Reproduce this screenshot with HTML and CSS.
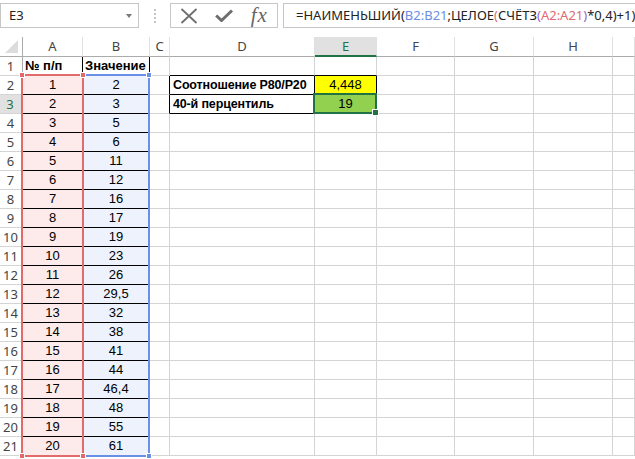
FILE: index.html
```html
<!DOCTYPE html>
<html>
<head>
<meta charset="utf-8">
<link rel="stylesheet" href="styles.css">
</head>
<body>
<div class="fbar">
  <div class="namebox">E3<span class="nb-arrow"></span></div>
  <div class="grip"><i></i><i></i><i></i><i></i></div>
  <div class="btns">
    <div class="btn"><svg width="18" height="16" viewBox="0 0 18 16"><path d="M1.5 1 L16.5 15 M16.5 1 L1.5 15" stroke="#6e6e6e" stroke-width="1.8" fill="none"/></svg></div>
    <div class="btn"><svg width="18" height="13" viewBox="0 0 18 13"><path d="M1.2 6.5 L6.5 11.5 L17 1.5" stroke="#6e6e6e" stroke-width="3" fill="none"/></svg></div>
    <div class="btn fx">fx</div>
  </div>
  <div class="finput">=НАИМЕНЬШИЙ(<span class="cb">B2:B21</span>;ЦЕЛОЕ<span class="cr">(</span>СЧЁТЗ<span class="cp">(</span><span class="cr">A2:A21</span><span class="cp">)</span>*0,4)+1)</div>
</div>

<div class="sheet">
  <div class="r hd"><div class="corner"><svg width="22" height="19" viewBox="0 0 22 19"><polygon points="5,16 18,16 18,3" fill="#dcdcdc"/></svg></div><div>A</div><div>B</div><div>C</div><div>D</div><div class="sel">E</div><div>F</div><div>G</div><div>H</div><div></div></div>
  <div class="r"><div class="rh">1</div><div class="a1">№ п/п</div><div class="b1">Значение</div><div></div><div class="tb"></div><div class="tb"></div><div></div><div></div><div></div><div></div></div>
  <div class="r"><div class="rh">2</div><div class="ka">1</div><div class="kb">2</div><div class="cl"></div><div class="d">Соотношение P80/P20</div><div class="y">4,448</div><div></div><div></div><div></div><div></div></div>
  <div class="r"><div class="rh rsel">3</div><div class="ka">2</div><div class="kb">3</div><div class="cl"></div><div class="d">40-й перцентиль</div><div class="g">19</div><div></div><div></div><div></div><div></div></div>
  <div class="r"><div class="rh">4</div><div class="ka">3</div><div class="kb">5</div><div></div><div></div><div></div><div></div><div></div><div></div><div></div></div>
  <div class="r"><div class="rh">5</div><div class="ka">4</div><div class="kb">6</div><div></div><div></div><div></div><div></div><div></div><div></div><div></div></div>
  <div class="r"><div class="rh">6</div><div class="ka">5</div><div class="kb">11</div><div></div><div></div><div></div><div></div><div></div><div></div><div></div></div>
  <div class="r"><div class="rh">7</div><div class="ka">6</div><div class="kb">12</div><div></div><div></div><div></div><div></div><div></div><div></div><div></div></div>
  <div class="r"><div class="rh">8</div><div class="ka">7</div><div class="kb">16</div><div></div><div></div><div></div><div></div><div></div><div></div><div></div></div>
  <div class="r"><div class="rh">9</div><div class="ka">8</div><div class="kb">17</div><div></div><div></div><div></div><div></div><div></div><div></div><div></div></div>
  <div class="r"><div class="rh">10</div><div class="ka">9</div><div class="kb">19</div><div></div><div></div><div></div><div></div><div></div><div></div><div></div></div>
  <div class="r"><div class="rh">11</div><div class="ka">10</div><div class="kb">23</div><div></div><div></div><div></div><div></div><div></div><div></div><div></div></div>
  <div class="r"><div class="rh">12</div><div class="ka">11</div><div class="kb">26</div><div></div><div></div><div></div><div></div><div></div><div></div><div></div></div>
  <div class="r"><div class="rh">13</div><div class="ka">12</div><div class="kb">29,5</div><div></div><div></div><div></div><div></div><div></div><div></div><div></div></div>
  <div class="r"><div class="rh">14</div><div class="ka">13</div><div class="kb">32</div><div></div><div></div><div></div><div></div><div></div><div></div><div></div></div>
  <div class="r"><div class="rh">15</div><div class="ka">14</div><div class="kb">38</div><div></div><div></div><div></div><div></div><div></div><div></div><div></div></div>
  <div class="r"><div class="rh">16</div><div class="ka">15</div><div class="kb">41</div><div></div><div></div><div></div><div></div><div></div><div></div><div></div></div>
  <div class="r"><div class="rh">17</div><div class="ka">16</div><div class="kb">44</div><div></div><div></div><div></div><div></div><div></div><div></div><div></div></div>
  <div class="r"><div class="rh">18</div><div class="ka">17</div><div class="kb">46,4</div><div></div><div></div><div></div><div></div><div></div><div></div><div></div></div>
  <div class="r"><div class="rh">19</div><div class="ka">18</div><div class="kb">48</div><div></div><div></div><div></div><div></div><div></div><div></div><div></div></div>
  <div class="r"><div class="rh">20</div><div class="ka">19</div><div class="kb">55</div><div></div><div></div><div></div><div></div><div></div><div></div><div></div></div>
  <div class="r"><div class="rh">21</div><div class="ka">20</div><div class="kb">61</div><div></div><div></div><div></div><div></div><div></div><div></div><div></div></div>

  <div class="rng blue"><i class="h tl"></i><i class="h tr"></i><i class="h bl"></i><i class="h br"></i></div>
  <div class="rng red"><i class="h tl"></i><i class="h tr"></i><i class="h bl"></i><i class="h br"></i></div>
  <div class="cur"><i class="fh"></i></div>
</div>
</body>
</html>
```

FILE: styles.css
```css
html, body {
  margin: 0;
  padding: 0;
  background: #fff;
  overflow: hidden;
}

body {
  width: 635px;
  height: 459px;
}

/* formula bar */
.fbar {
  display: flex;
  height: 25px;
  margin-top: 3px;
}

.namebox {
  position: relative;
  box-sizing: border-box;
  width: 139px;
  border: 1px solid #c6c6c6;
  padding-left: 8px;
  font: 13px "Noto Sans", sans-serif;
  line-height: 23px;
  color: #222;
}

.nb-arrow {
  position: absolute;
  right: 6px;
  top: 10px;
  width: 0;
  height: 0;
  border-left: 3.5px solid transparent;
  border-right: 3.5px solid transparent;
  border-top: 4px solid #7a7a7a;
}

.grip {
  width: 31px;
  display: flex;
  flex-direction: column;
  align-items: center;
  justify-content: center;
  gap: 2px;
}

.grip i {
  display: block;
  width: 2px;
  height: 2px;
  background: #c4c4c4;
}

.btns {
  box-sizing: border-box;
  width: 108px;
  border: 1px solid #c6c6c6;
  display: flex;
}

.btn {
  width: 36px;
  display: flex;
  align-items: center;
  justify-content: center;
}

.btn.fx {
  font: italic 21px "Liberation Serif", serif;
  color: #666;
  line-height: 23px;
  letter-spacing: 1px;
}

.finput {
  flex: 1;
  margin-left: 5px;
  box-sizing: border-box;
  border: 1px solid #c6c6c6;
  border-right: none;
  padding-left: 12px;
  font: 13px "Noto Sans", sans-serif;
  line-height: 23px;
  color: #222;
  white-space: nowrap;
  overflow: hidden;
}

.cb { color: #6b8ee2; }
.cr { color: #e06a74; }
.cp { color: #9b63c4; }

/* sheet */
.sheet {
  position: relative;
  margin-top: 9px;
}

.r {
  display: flex;
  height: 19px;
}

.r > div {
  box-sizing: border-box;
  flex: none;
  height: 100%;
  border-right: 1px solid #d4d4d4;
  border-bottom: 1px solid #d4d4d4;
  font: 13px "Liberation Sans", Arial, sans-serif;
  line-height: 18px;
  color: #000;
  white-space: nowrap;
  overflow: hidden;
}

.r > div:nth-child(1) { width: 23px; }
.r > div:nth-child(2) { width: 60px; }
.r > div:nth-child(3) { width: 67px; }
.r > div:nth-child(4) { width: 20px; }
.r > div:nth-child(5) { width: 145px; }
.r > div:nth-child(6) { width: 62px; }
.r > div:nth-child(7) { width: 78px; }
.r > div:nth-child(8) { width: 79px; }
.r > div:nth-child(9) { width: 79px; }
.r > div:nth-child(10) { flex: 1; }

.r.hd { height: 20px; }

.r.hd > div {
  border-bottom-color: #ababab;
  border-right-color: #e0e0e0;
  text-align: center;
  color: #444;
  font: 13px "Noto Sans", sans-serif;
  line-height: 19px;
}

.r.hd > .corner {
  border-right-color: #ababab;
}

.r.hd > .sel {
  background: #e1e1e1;
  color: #217346;
  border-bottom: 2px solid #217346;
  line-height: 18px;
}

.r > .rh {
  text-align: center;
  color: #444;
  font: 13px "Noto Sans", sans-serif;
  line-height: 18px;
  border-right-color: #ababab;
  padding-right: 1px;
}

.r > .rsel {
  background: #e1e1e1;
  color: #217346;
  border-right: 2px solid #217346;
}

.r > .a1,
.r > .b1 {
  font-weight: bold;
  padding-left: 2px;
  border-right-color: #000;
}

.r > .ka {
  background: #fdeaea;
  border-bottom-color: #000;
  text-align: center;
}

.r > .kb {
  background: #edf2fc;
  border-bottom-color: #000;
  border-right-color: #000;
  text-align: center;
}

.r > .tb { border-bottom-color: #000; }
.r > .cl { border-right-color: #000; }

.r > .d {
  font-weight: bold;
  font-size: 12.5px;
  letter-spacing: -0.15px;
  padding-left: 3px;
  border-right-color: #000;
  border-bottom-color: #000;
}

.r > .y {
  background: #ffff00;
  text-align: center;
  border-right-color: #000;
  border-bottom-color: #000;
}

.r > .g {
  background: #92d050;
  text-align: center;
  border-right-color: #000;
  border-bottom-color: #000;
}

/* range highlights (overlays) */
.rng {
  position: absolute;
  box-sizing: border-box;
  top: 37px;
  height: 383px;
  border: 2px solid;
}

.red {
  left: 21px;
  width: 63px;
  border-color: #e26a6a;
  color: #e26a6a;
}

.blue {
  left: 82px;
  width: 68px;
  border-color: #6a8fe6;
  color: #6a8fe6;
}

.h {
  position: absolute;
  width: 4px;
  height: 4px;
  background: currentColor;
  border: 1px solid #fff;
}

.tl { left: -4px; top: -4px; }
.tr { right: -4px; top: -4px; }
.bl { left: -4px; bottom: -4px; }
.br { right: -4px; bottom: -4px; }

.cur {
  position: absolute;
  box-sizing: border-box;
  left: 313px;
  top: 56px;
  width: 64px;
  height: 21px;
  border: 2px solid #217346;
}

.fh {
  position: absolute;
  right: -4px;
  bottom: -4px;
  width: 5px;
  height: 5px;
  background: #217346;
  border: 1px solid #fff;
}
```
